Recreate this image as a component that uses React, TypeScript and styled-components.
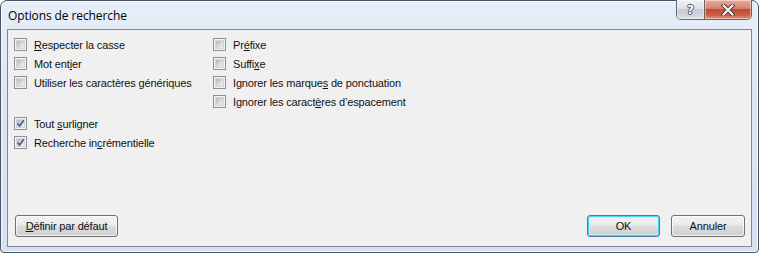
import React from "react";
import styled, { createGlobalStyle } from "styled-components";

const GlobalStyle = createGlobalStyle`
  html, body {
    margin: 0;
    padding: 0;
    background: #ffffff;
  }
  * {
    box-sizing: border-box;
  }
`;

const Window = styled.div`
  width: 759px;
  height: 253px;
  border: 1px solid #4a5462;
  border-radius: 7px 7px 4px 4px;
  background: linear-gradient(to bottom, #e6eef9 0%, #dbe6f4 40%, #d6e2f1 100%);
  box-shadow: inset 0 0 0 1px #f4f8fd;
  display: flex;
  flex-direction: column;
  font-family: "Liberation Sans", Arial, sans-serif;
`;

const TitleBar = styled.div`
  height: 28px;
  display: flex;
  justify-content: space-between;
  align-items: flex-start;
  padding: 0 6px 0 7px;
`;

const Title = styled.div`
  font-family: "Open Sans", "Liberation Sans", sans-serif;
  font-size: 12px;
  color: #000;
  padding-top: 6px;
  letter-spacing: -0.1px;
`;

const Controls = styled.div`
  display: flex;
  margin-top: -1px;
  border: 1px solid #5c6670;
  border-top: none;
  border-radius: 0 0 5px 5px;
  overflow: hidden;
  height: 20px;
`;

const CaptionButton = styled.div<{ $variant: "help" | "close" }>`
  width: ${(p) => (p.$variant === "close" ? "47px" : "27px")};
  height: 100%;
  display: flex;
  align-items: center;
  justify-content: center;
  background: ${(p) =>
    p.$variant === "close"
      ? "linear-gradient(to bottom, #e9a99b 0%, #d98170 45%, #c14b35 50%, #cf5e44 80%, #e39a82 100%)"
      : "linear-gradient(to bottom, #eef1f5 0%, #dde2e9 45%, #c6ccd5 50%, #cfd4db 80%, #e3e7ec 100%)"};
  border-left: ${(p) => (p.$variant === "close" ? "1px solid #6f5c5c" : "none")};
  box-shadow: inset 0 0 0 1px rgba(255, 255, 255, 0.45);
`;

const HelpGlyph = styled.span`
  font-family: "DejaVu Sans", sans-serif;
  font-weight: bold;
  font-size: 12px;
  color: #ffffff;
  line-height: 1;
  text-shadow: 1px 0 0 #4d5560, -1px 0 0 #4d5560, 0 1px 0 #4d5560,
    0 -1px 0 #4d5560;
`;

const Client = styled.div`
  flex: 1;
  margin: 0 6px 5px 6px;
  border: 1px solid #828790;
  background: #f0f0f0;
  display: flex;
  flex-direction: column;
  justify-content: space-between;
  padding: 5px 6px 9px 6px;
`;

const Columns = styled.div`
  display: flex;
`;

const Column = styled.div<{ $width?: number }>`
  display: flex;
  flex-direction: column;
  width: ${(p) => (p.$width ? `${p.$width}px` : "auto")};
`;

const Group = styled.div`
  display: flex;
  flex-direction: column;
  & + & {
    margin-top: 22px;
  }
`;

const Row = styled.label`
  height: 19px;
  display: flex;
  align-items: center;
  gap: 7px;
  font-size: 11px;
  letter-spacing: -0.15px;
  color: #111;
`;

const Box = styled.span`
  width: 13px;
  height: 13px;
  border: 1px solid #8e8f8f;
  background: #f4f4f4;
  padding: 1px;
  display: flex;
`;

const BoxInner = styled.span`
  flex: 1;
  background: linear-gradient(135deg, #b1b5bb 0%, #d5d8dc 50%, #f1f1f2 100%);
  border: 1px solid #d2d4d6;
  display: flex;
  align-items: center;
  justify-content: center;
  position: relative;
`;

const Check = styled.svg`
  position: absolute;
  left: -1px;
  top: -1px;
`;

const U = styled.span`
  text-decoration: underline;
  text-underline-offset: 1px;
`;

const Footer = styled.div`
  display: flex;
  justify-content: space-between;
  align-items: flex-end;
  padding-left: 1px;
`;

const ButtonGroup = styled.div`
  display: flex;
  gap: 11px;
`;

const Button = styled.div<{ $default?: boolean; $width: number }>`
  width: ${(p) => p.$width}px;
  height: 22px;
  border: 1px solid ${(p) => (p.$default ? "#3c7fb1" : "#707070")};
  border-radius: 3px;
  background: linear-gradient(
    to bottom,
    #f2f2f2 0%,
    #ebebeb 45%,
    #dddddd 50%,
    #cfcfcf 100%
  );
  box-shadow: ${(p) =>
    p.$default
      ? "inset 0 0 0 1px #48d3fb, inset 0 0 0 2px rgba(200,240,255,0.6)"
      : "inset 0 0 0 1px rgba(255,255,255,0.7)"};
  display: flex;
  align-items: center;
  justify-content: center;
  font-size: 11px;
  letter-spacing: -0.15px;
  color: #111;
`;

type Opt = { label: React.ReactNode; checked?: boolean };

const u = (before: string, key: string, after: string) => (
  <>
    {before}
    <U>{key}</U>
    {after}
  </>
);

const left1: Opt[] = [
  { label: u("", "R", "especter la casse") },
  { label: u("Mot ent", "i", "er") },
  { label: u("Utiliser les caractères ", "g", "énériques") },
];

const left2: Opt[] = [
  { label: u("Tout ", "s", "urligner"), checked: true },
  { label: u("Recherche in", "c", "rémentielle"), checked: true },
];

const right: Opt[] = [
  { label: u("Pr", "é", "fixe") },
  { label: u("Suffi", "x", "e") },
  { label: u("Ignorer les marque", "s", " de ponctuation") },
  { label: u("Ignorer les caract", "è", "res d’espacement") },
];

const CheckRow = ({ label, checked }: Opt) => (
  <Row>
    <Box>
      <BoxInner>
        {checked && (
          <Check width="9" height="9" viewBox="0 0 9 9">
            <path
              d="M1.5 4.5 L3.6 7 L7.8 1.2"
              fill="none"
              stroke="#3d5a9a"
              strokeWidth="1.6"
            />
          </Check>
        )}
      </BoxInner>
    </Box>
    <span>{label}</span>
  </Row>
);

export default function App() {
  return (
    <>
      <GlobalStyle />
      <Window>
        <TitleBar>
          <Title>Options de recherche</Title>
          <Controls>
            <CaptionButton $variant="help">
              <HelpGlyph>?</HelpGlyph>
            </CaptionButton>
            <CaptionButton $variant="close">
              <svg width="14" height="12" viewBox="0 0 14 12">
                <path
                  d="M2.5 1.5 L11.5 10.5 M11.5 1.5 L2.5 10.5"
                  stroke="#4b3a3a"
                  strokeWidth="4"
                  strokeLinecap="square"
                />
                <path
                  d="M2.5 1.5 L11.5 10.5 M11.5 1.5 L2.5 10.5"
                  stroke="#ffffff"
                  strokeWidth="2"
                  strokeLinecap="square"
                />
              </svg>
            </CaptionButton>
          </Controls>
        </TitleBar>
        <Client>
          <Columns>
            <Column $width={199}>
              <Group>
                {left1.map((o, i) => (
                  <CheckRow key={i} {...o} />
                ))}
              </Group>
              <Group>
                {left2.map((o, i) => (
                  <CheckRow key={i} {...o} />
                ))}
              </Group>
            </Column>
            <Column>
              {right.map((o, i) => (
                <CheckRow key={i} {...o} />
              ))}
            </Column>
          </Columns>
          <Footer>
            <Button $width={103}>{u("", "D", "éfinir par défaut")}</Button>
            <ButtonGroup>
              <Button $width={73} $default>
                OK
              </Button>
              <Button $width={74}>Annuler</Button>
            </ButtonGroup>
          </Footer>
        </Client>
      </Window>
    </>
  );
}
